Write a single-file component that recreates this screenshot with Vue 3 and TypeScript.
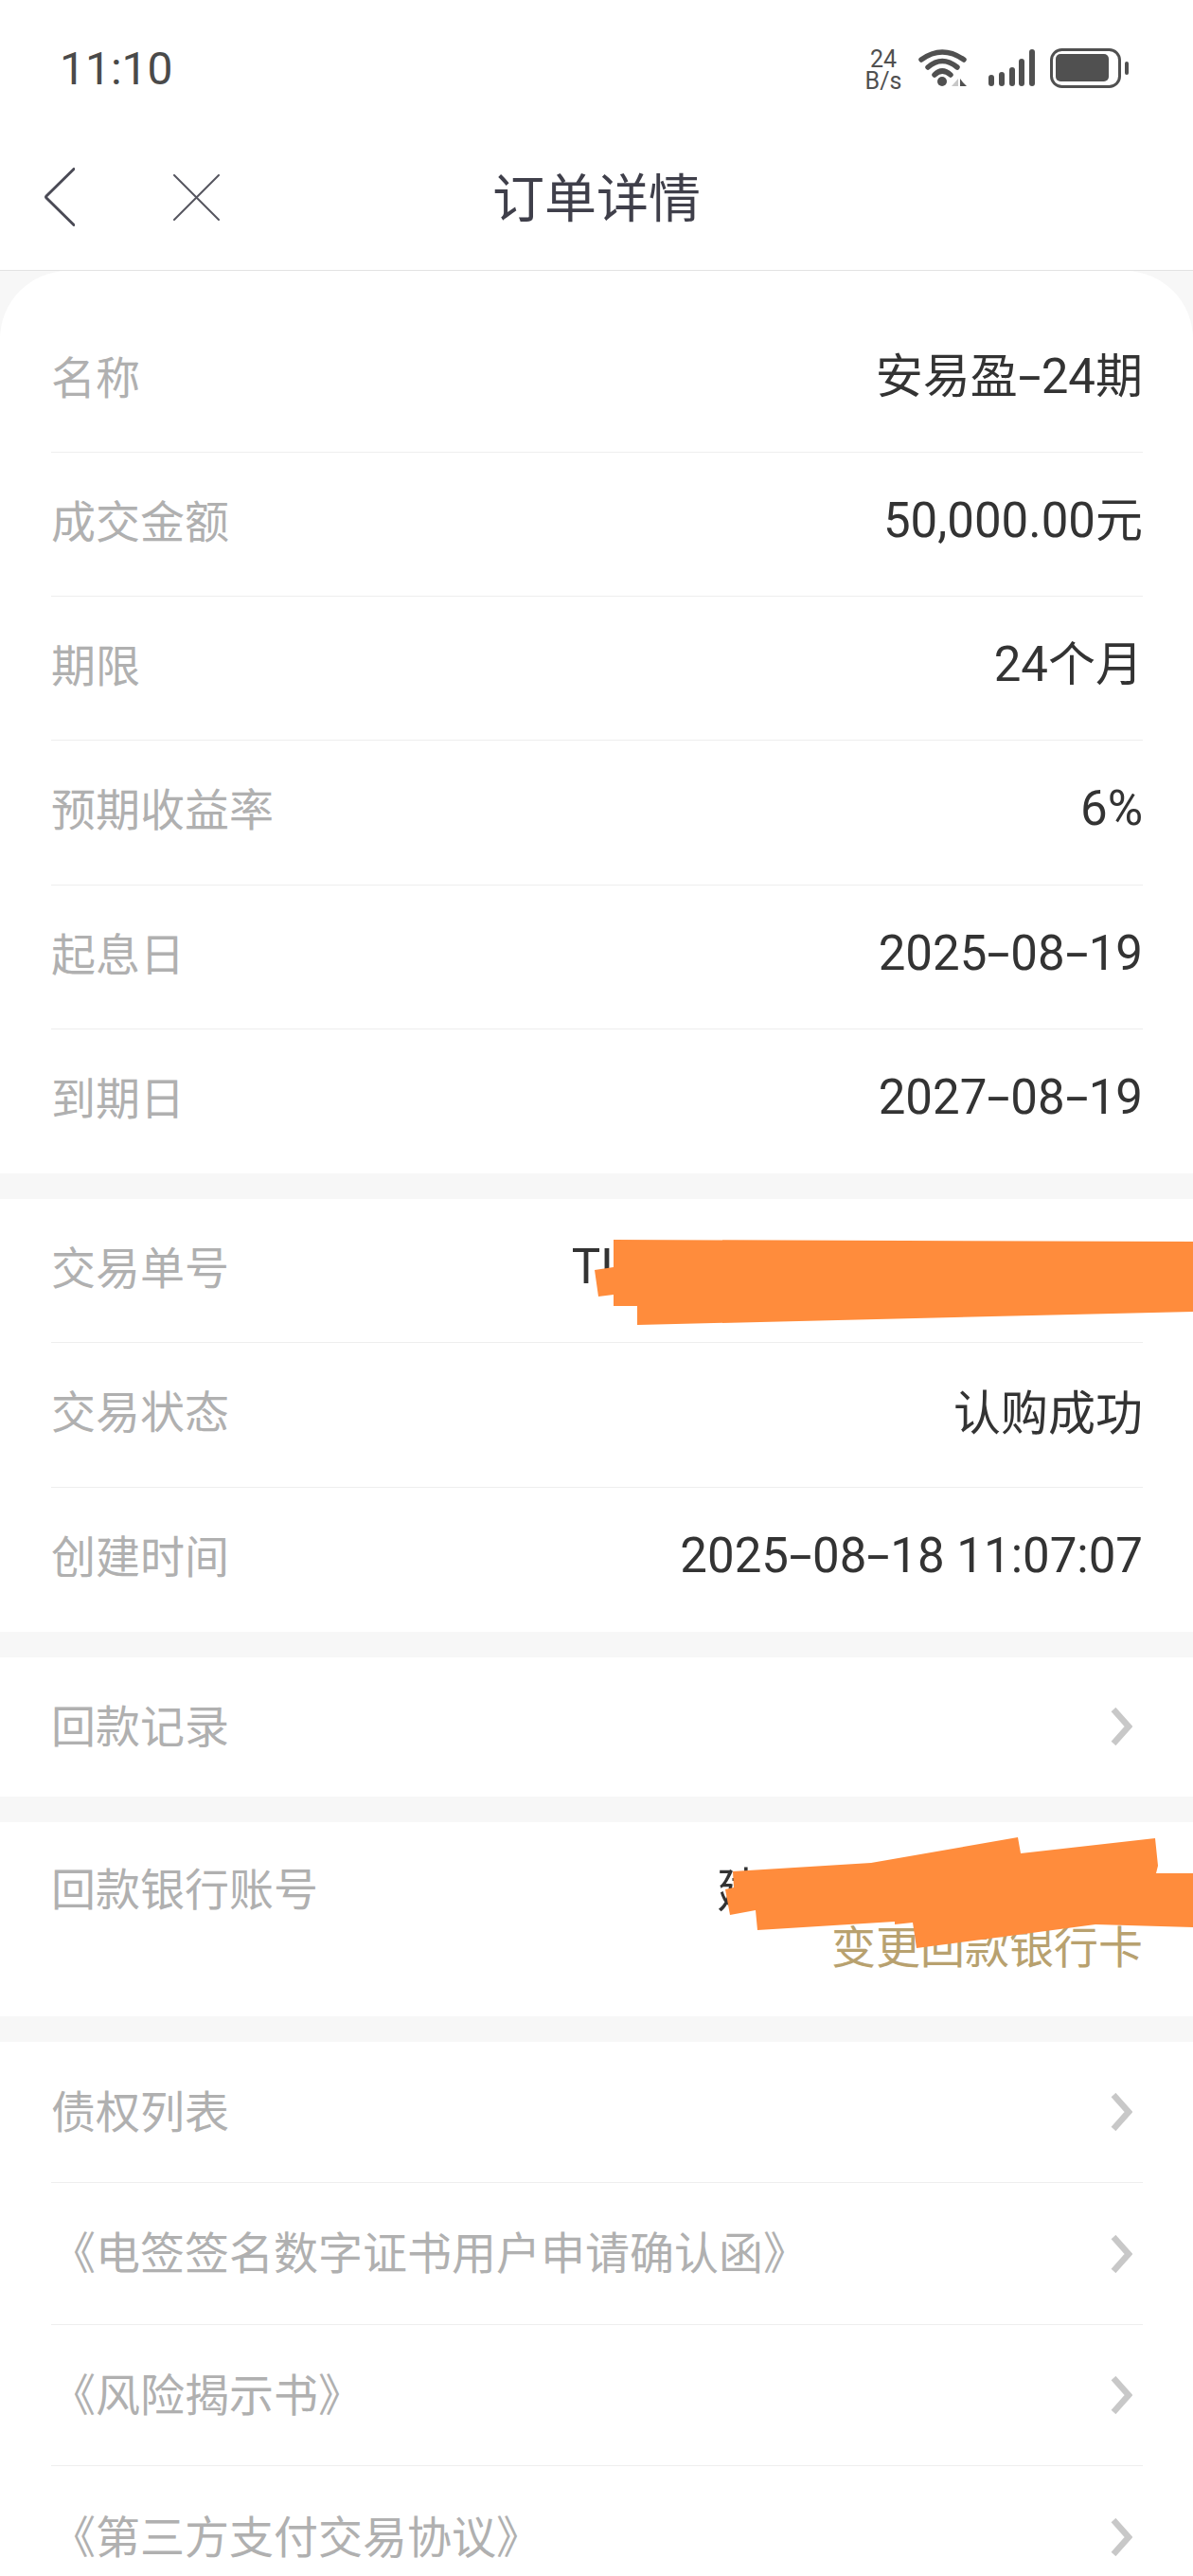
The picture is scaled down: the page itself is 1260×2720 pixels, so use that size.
<script setup lang="ts">
interface Row { label: string; value: string }
interface Token { text: string; kind: 'cjk' | 'dash' | 'latin' }

const terms: Row[] = [
  { label: '名称', value: '安易盈-24期' },
  { label: '成交金额', value: '50,000.00元' },
  { label: '期限', value: '24个月' },
  { label: '预期收益率', value: '6%' },
  { label: '起息日', value: '2025-08-19' },
  { label: '到期日', value: '2027-08-19' },
]
const links: string[] = ['债权列表', '《电签签名数字证书用户申请确认函》', '《风险揭示书》', '《第三方支付交易协议》']

// The reference font sets digits, dashes and Han at different widths, so each run is styled on its own.
function tokens(value: string): Token[] {
  const runs = value.match(/-|[\u4e00-\u9fff]+|[^-\u4e00-\u9fff]+/g) ?? []
  return runs.map((text) => ({
    text,
    kind: text === '-' ? 'dash' : /[\u4e00-\u9fff]/.test(text) ? 'cjk' : 'latin',
  }))
}
</script>

<template>
  <div class="page">
    <header class="top">
      <div class="status">
        <span class="time">11:10</span>
        <div class="status-icons">
          <div class="speed">24<br />B/s</div>
          <svg class="wifi" width="52" height="40" viewBox="970 52 52 40">
            <g fill="none" stroke="#505050" stroke-width="5.5" stroke-linecap="round">
              <path d="M973 63 Q995 47 1018 63" />
              <path d="M980 71 Q995 58 1011 71" />
              <path d="M987 79 Q995 71 1004 79" />
            </g>
            <circle cx="995" cy="86" r="5" fill="#505050" />
            <path d="M1012 83 V91 H1005 Z" fill="#c8c8c8" />
            <path d="M1014 83 V91 H1021 L1017 87 Z" fill="#505050" />
          </svg>
          <svg class="signal" width="49" height="40" viewBox="1044 52 49 40">
            <g fill="#505050">
              <rect x="1044" y="79" width="6" height="12" rx="3" />
              <rect x="1055" y="76" width="6" height="15" rx="3" />
              <rect x="1066" y="71" width="6" height="20" rx="3" />
              <rect x="1076" y="62" width="6" height="29" rx="3" />
              <rect x="1087" y="52" width="6" height="39" rx="3" />
            </g>
          </svg>
          <svg class="battery" width="83" height="42" viewBox="1109 51 83 42">
            <rect x="1110.5" y="52.5" width="72" height="39" rx="11" fill="none" stroke="#505050" stroke-width="3" />
            <rect x="1115" y="57" width="56" height="29" rx="5" fill="#505050" />
            <rect x="1188" y="65" width="4" height="14" rx="2" fill="#505050" />
          </svg>
        </div>
      </div>
      <nav class="nav">
        <div class="nav-icons">
          <svg width="32" height="62" viewBox="0 0 32 62">
            <path d="M31 1.5 L2 30 Q1 31 2 32 L31 60.5" fill="none" stroke="#4a4a55" stroke-width="3" stroke-linecap="round" />
          </svg>
          <svg class="close" width="49" height="49" viewBox="0 0 49 49">
            <path d="M1 1 L48 48 M48 1 L1 48" fill="none" stroke="#55555f" stroke-width="2" stroke-linecap="round" />
          </svg>
        </div>
        <h1 class="title">订单详情</h1>
        <div></div>
      </nav>
    </header>

    <main>
      <section class="card first">
        <div v-for="row in terms" :key="row.label" class="row">
          <span class="label">{{ row.label }}</span>
          <span class="value">
            <span v-for="(t, i) in tokens(row.value)" :key="i" :class="t.kind">{{ t.text }}</span>
          </span>
        </div>
      </section>

      <section class="card">
        <div class="row">
          <span class="label">交易单号</span>
          <span class="value order-no"><span class="latin">TI</span></span>
        </div>
        <div class="row">
          <span class="label">交易状态</span>
          <span class="value"><span class="cjk">认购成功</span></span>
        </div>
        <div class="row">
          <span class="label">创建时间</span>
          <span class="value">
            <span v-for="(t, i) in tokens('2025-08-18 11:07:07')" :key="i" :class="t.kind">{{ t.text }}</span>
          </span>
        </div>
      </section>

      <section class="card">
        <div class="row link single">
          <span class="label">回款记录</span>
          <svg class="chevron" width="23" height="40" viewBox="0 0 23 40">
            <path d="M3 2 L19 20 L3 38" fill="none" stroke="#c8c8c8" stroke-width="6.5" />
          </svg>
        </div>
      </section>

      <section class="card">
        <div class="bank">
          <span class="label">回款银行账号</span>
          <div class="bank-side">
            <span class="value bank-name"><span class="cjk">建</span></span>
            <span class="change">变更回款银行卡</span>
          </div>
        </div>
      </section>

      <section class="card">
        <div v-for="item in links" :key="item" class="row link">
          <span class="label">{{ item }}</span>
          <svg class="chevron" width="23" height="40" viewBox="0 0 23 40">
            <path d="M3 2 L19 20 L3 38" fill="none" stroke="#c8c8c8" stroke-width="6.5" />
          </svg>
        </div>
      </section>
    </main>

    <svg class="scribble" width="1260" height="2720" viewBox="0 0 1260 2720">
      <polygon fill="#ff8c3c" points="648,1309 1260,1311 1260,1385 673,1399 673,1379 648,1379 648,1367 632,1369 628,1341 648,1338" />
      <polygon fill="#ff8c3c" points="774,1976 920,1967 1075,1940 1078,1957 1220,1941 1223,1970 1221,1978 1260,1978 1260,2035 1157,2032 968,2057 964,2030 945,2032 945,2029 800,2038 798,2017 771,2022 766,1995 775,1993" />
    </svg>
  </div>
</template>

<style>
html, body { margin: 0; background: #f7f7f7; }
</style>

<style scoped>
.page {
  position: relative;
  width: 1260px;
  height: 2720px;
  overflow: hidden;
  background: #f7f7f7;
  font-family: Roboto, "Noto Sans CJK SC", sans-serif;
}
.top {
  background: #fff;
  border-bottom: 1px solid #e3e3e3;
  height: 285px;
}
.status {
  height: 131px;
  box-sizing: border-box;
  padding: 51px 68px 0 63px;
  display: flex;
  justify-content: space-between;
  align-items: flex-start;
}
.time {
  font-size: 48px;
  line-height: 44px;
  color: #4a4a4a;
}
.status-icons {
  display: flex;
  align-items: flex-start;
}
.speed {
  width: 40px;
  text-align: center;
  font-size: 25px;
  line-height: 23px;
  color: #505050;
}
.wifi { margin-left: 17px; margin-top: 1px; }
.signal { margin-left: 22px; margin-top: 1px; }
.battery { margin-left: 16px; }
.nav {
  height: 154px;
  display: grid;
  grid-template-columns: 1fr auto 1fr;
  align-items: center;
}
.nav-icons {
  display: flex;
  align-items: center;
  padding-left: 47px;
}
.close { margin-left: 104px; }
.title {
  margin: 0 0 6px;
  font-size: 55px;
  font-weight: 400;
  color: #3f3f4a;
  font-family: "Noto Sans CJK SC", sans-serif;
}
.card {
  background: #fff;
  padding: 0 53px 0 54px;
  margin-bottom: 27px;
}
.card.first {
  padding-top: 39.5px;
  border-radius: 72px 72px 0 0;
}
.row {
  display: flex;
  align-items: center;
  justify-content: space-between;
  height: 152.25px;
  box-sizing: border-box;
  padding-bottom: 12px;
  border-bottom: 1px solid #eeeeee;
}
.row:last-child { border-bottom: none; }
.row.link { height: 149.5px; padding-bottom: 8px; }
.row.single { height: 147px; }
.label {
  font-size: 47px;
  color: #b0b0b0;
  font-family: "Noto Sans CJK SC", sans-serif;
}
.value {
  font-family: "Noto Sans CJK SC", sans-serif;
  font-size: 50px;
  line-height: 60px;
  color: #333333;
  white-space: pre;
}
.latin {
  font-family: Roboto, sans-serif;
  font-size: 51px;
}
.cjk {
  font-family: "Noto Sans CJK SC", sans-serif;
  font-size: 50px;
}
.dash {
  display: inline-block;
  width: 25px;
  text-align: center;
  font-family: Roboto, sans-serif;
  font-size: 51px;
  transform: scaleX(1.7);
}
.order-no { margin-right: 559px; }
.chevron { margin-top: 8px; margin-right: 11px; }
.bank {
  display: flex;
  justify-content: space-between;
  align-items: flex-start;
  height: 205px;
  box-sizing: border-box;
  padding-top: 38px;
  line-height: 60px;
}
.bank-side {
  display: flex;
  flex-direction: column;
  align-items: flex-end;
}
.bank-name { margin-right: 400px; }
.change {
  margin-top: 1px;
  font-size: 47px;
  color: #b8a16f;
  font-family: "Noto Sans CJK SC", sans-serif;
}
.scribble {
  position: absolute;
  left: 0;
  top: 0;
  pointer-events: none;
}
</style>
